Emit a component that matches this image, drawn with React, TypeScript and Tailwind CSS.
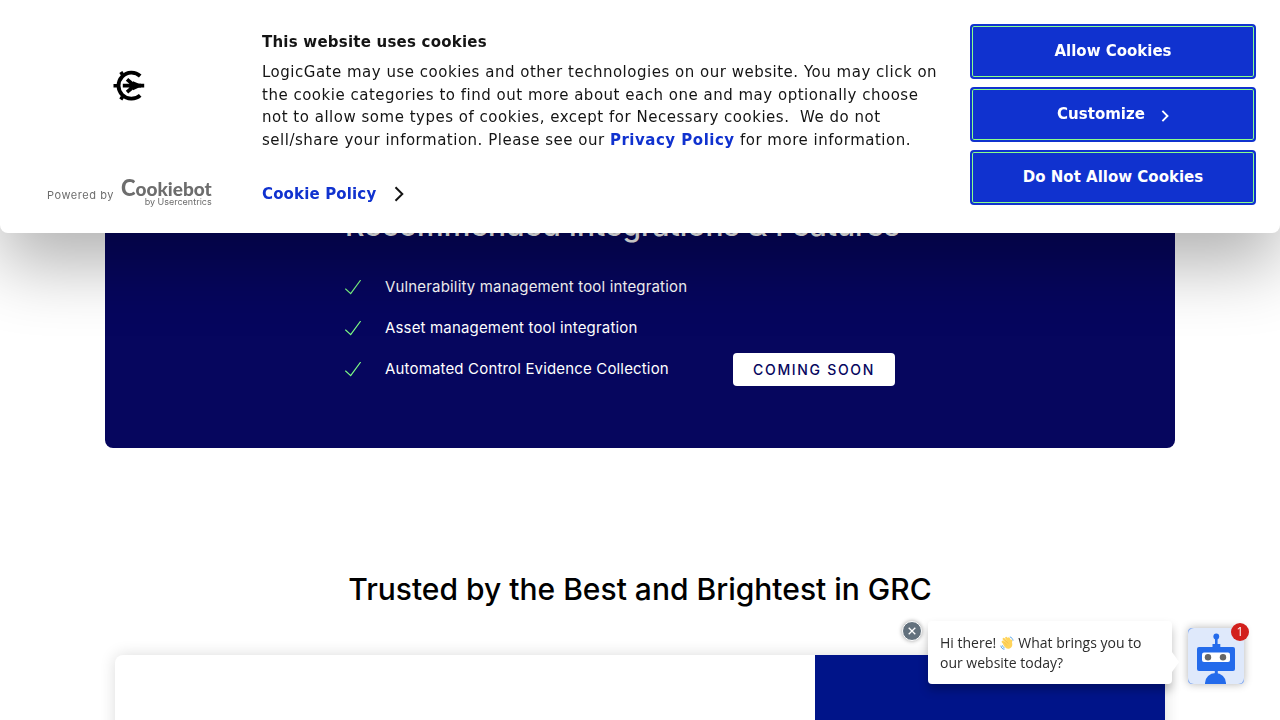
import React from "react";

const features = [
  { label: "Vulnerability management tool integration", soon: false },
  { label: "Asset management tool integration", soon: false },
  { label: "Automated Control Evidence Collection", soon: true },
];

function LogicGateMark() {
  return (
    <svg width="32" height="32" viewBox="0 0 32 32" fill="none" stroke="#000" role="img" aria-label="LogicGate">
      <path d="M27.2 6A13 13 0 1 0 27.2 25.4" strokeWidth="3.8" />
      <path d="M0.5 15.7H5M7.8 2L9.5 4.6M7.8 29.4L9.5 26.800" strokeWidth="3.6" />
      <path d="M9.800 15.700H28M14 9.300L21.500 15.700L14 22.100" strokeWidth="3.7" />
      <path d="M20 11.300L26 13.800H31.200V17.600H26L20 20.200Z" fill="#000" stroke="none" />
    </svg>
  );
}

function Chevron({ className }: { className: string }) {
  return (
    <svg className={className} viewBox="0 0 10 16" fill="none" stroke="currentColor" strokeWidth="2" aria-hidden="true">
      <path d="M1.5 1.2L8.3 8L1.5 14.8" />
    </svg>
  );
}

function WavingHand() {
  return (
    <svg className="mx-1 -mt-0.5 inline-block" width="14" height="14" viewBox="0 0 28 28" fill="none" strokeLinecap="round" role="img" aria-label="Waving hand">
      <g stroke="#ffd45c" strokeWidth="4.6">
        <path d="M5.500 11.500L13 20M7.500 5.800L16 16M12.500 3.800L19.500 13.500M17.500 5L21.500 13" />
        <path d="M21.500 13L22.500 9.500" />
      </g>
      <path d="M8 14L18 8L23.500 12C26 18 24 24 18 25.500C13 26.500 9 22 6.500 17.500Z" fill="#ffd45c" />
      <path d="M10 7.500L16 14.500M7.500 12L13.500 18.500" stroke="#eeb043" strokeWidth="1" />
      <path d="M20.500 2C23.500 3 25.500 5.500 26 8.500M1.800 20C2.300 23.500 4.500 26 8 26.500M5 19.500C5.500 21.500 6.500 22.800 8.500 23.500" stroke="#5fa8ea" strokeWidth="2" />
    </svg>
  );
}

function CookieButton({ children }: { children: React.ReactNode }) {
  return (
    <button
      type="button"
      className="flex h-[55px] w-full items-center justify-center rounded border-2 border-[#1032cf] bg-[#1032cf] text-[15px] font-bold text-white shadow-[inset_0_0_0_1px_#8aff8a]"
    >
      {children}
    </button>
  );
}

function CookieBanner() {
  return (
    <div
      role="dialog"
      aria-label="This website uses cookies"
      className="fixed inset-x-0 top-0 z-20 flex rounded-b-lg bg-white px-6 pt-6 pb-7 font-['DejaVu_Sans',sans-serif] text-[15px] text-[#141414] shadow-[0_32px_68px_rgba(0,0,0,0.3)]"
    >
      <div className="flex w-[238px] shrink-0 flex-col justify-between pt-[46px]">
        <div className="pl-[89px]">
          <LogicGateMark />
        </div>
        <a href="#cookiebot" className="-mb-0.5 flex items-end gap-2 pl-[23px] font-['Inter',sans-serif] text-[#6d6d6d]">
          <span className="pb-1 text-[11px] leading-4 tracking-wider">Powered by</span>
          <span className="flex flex-col items-start">
            <span className="flex items-baseline font-['Lato',sans-serif] text-[19px] leading-4 font-black">
              <span className="-ml-px text-[22px]">C</span>ookiebot
            </span>
            <span className="self-end text-[9px] leading-[10px]">by Usercentrics</span>
          </span>
        </a>
      </div>
      <div className="min-w-0 flex-1 pt-[7px] pr-[30px]">
        <h2 className="leading-[22px] font-bold tracking-[0.015em]">This website uses cookies</h2>
        <p className="mt-2 leading-normal tracking-[0.034em]">
          LogicGate may use cookies and other technologies on our website. You may click on the cookie categories to find
          out more about each one and may optionally choose not to allow some types of cookies, except for Necessary
          cookies.&nbsp; We do not sell/share your information. Please see our{" "}
          <a href="#privacy" className="font-bold text-[#1032cf]">
            Privacy Policy
          </a>{" "}
          for more information.
        </p>
        <a href="#cookie-policy" className="mt-8 flex items-center gap-[18px] leading-[22px] font-bold tracking-[0.01em] text-[#1032cf]">
          Cookie Policy
          <Chevron className="h-4 w-2.5 text-[#141414]" />
        </a>
      </div>
      <div className="flex w-[286px] shrink-0 flex-col gap-2">
        <CookieButton>Allow Cookies</CookieButton>
        <CookieButton>
          Customize
          <Chevron className="mt-[3px] ml-4 h-3 w-2 stroke-[2.5]" />
        </CookieButton>
        <CookieButton>Do Not Allow Cookies</CookieButton>
      </div>
    </div>
  );
}

function ChatWidget() {
  return (
    <aside aria-label="Chat" className="fixed right-9 bottom-9 z-10 flex items-end font-['Open_Sans',sans-serif]">
      <button
        type="button"
        aria-label="Close message"
        className="mr-1.5 flex size-5 items-center justify-center self-start rounded-full border border-white bg-[#63717d] text-white shadow-[0_0_4px_rgba(0,0,0,0.4)]"
      >
        <svg width="8" height="8" viewBox="0 0 8 8" stroke="currentColor" strokeWidth="1.3" aria-hidden="true">
          <path d="M0.7 0.7L7.3 7.3M7.3 0.7L0.7 7.3" />
        </svg>
      </button>
      <div className="relative mr-4 w-[244px] rounded bg-white px-3 pt-3 pb-[11px] text-sm leading-5 text-[#2c2c2c] shadow-[0_6px_10px_rgba(0,0,0,0.25)]">
        Hi there!
        <WavingHand />
        What brings you to our website today?
        <svg className="absolute bottom-3 left-full" width="7" height="20" viewBox="0 0 7 20" aria-hidden="true">
          <path d="M0 0L7 10L0 20Z" fill="#fff" />
        </svg>
      </div>
      <button type="button" aria-label="Open chat, 1 new message" className="relative size-14 rounded shadow-[0_0_9px_rgba(0,0,0,0.3)]">
        <svg width="56" height="56" viewBox="0 0 56 56" aria-hidden="true">
          <rect width="56" height="56" rx="4" fill="#7ea6ee" />
          <rect width="56" height="56" rx="6" fill="#dfe9fb" />
          <circle cx="28.3" cy="8.5" r="2.9" fill="#246beb" />
          <path d="M27 10h2.6v6h2.7v3H24.500v-3H27zM26.800 42h3v4h-3z" fill="#246beb" />
          <rect x="9" y="19" width="38" height="24" rx="2" fill="#246beb" />
          <rect x="14" y="24.500" width="28" height="9.500" rx="2" fill="#fff" />
          <circle cx="20" cy="29.300" r="3.200" fill="#666" />
          <circle cx="35" cy="29.300" r="3.200" fill="#666" />
          <path d="M17 56V55a10.500 10 0 0 1 21 0V56Z" fill="#246beb" />
        </svg>
        <span className="absolute -top-[5px] -right-[5px] flex size-[18px] items-center justify-center rounded-full bg-[#d2201c] text-xs text-white">
          1
        </span>
      </button>
    </aside>
  );
}

export default function App() {
  return (
    <div className="h-screen overflow-hidden bg-white font-['Inter',sans-serif]">
      <CookieBanner />
      <main className="mx-auto max-w-[1070px]">
        <section className="rounded-b-lg bg-[#06065e] px-60 pt-[207px] pb-[62px] text-white">
          <h2 className="text-[30px] leading-9 font-medium">Recommended Integrations &amp; Features</h2>
          <ul className="mt-7 flex max-w-[550px] flex-col gap-2">
            {features.map((feature) => (
              <li key={feature.label} className="flex h-[33px] items-center">
                <svg className="mr-6" width="16" height="16" viewBox="0 1 16 16" fill="none" stroke="#7dfb84" strokeWidth="1.2" aria-hidden="true">
                  <path d="M0.3 9.600L5.700 14.600L15.700 1" />
                </svg>
                <span className="text-[15px] tracking-[0.011em]">{feature.label}</span>
                {feature.soon && (
                  <span className="ml-auto flex h-full items-center rounded bg-white px-5 text-sm font-medium tracking-[0.12em] text-[#06065e]">
                    COMING SOON
                  </span>
                )}
              </li>
            ))}
          </ul>
        </section>
        <section className="px-2.5 pt-[123px]">
          <h2 className="text-center text-[30px] leading-9 font-medium text-black">Trusted by the Best and Brightest in GRC</h2>
          <div className="mt-12 flex h-80 overflow-hidden rounded-lg bg-white shadow-[0_0_16px_rgba(0,0,0,0.14)]">
            <div className="w-2/3" />
            <div className="w-1/3 bg-[#001489]" />
          </div>
        </section>
      </main>
      <ChatWidget />
    </div>
  );
}
